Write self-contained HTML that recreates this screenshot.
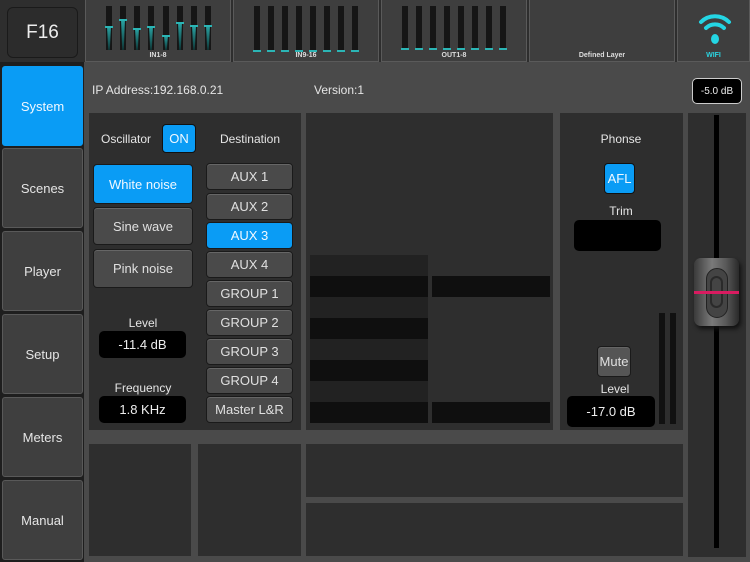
<!DOCTYPE html>
<html><head><meta charset="utf-8"><style>
*{margin:0;padding:0;box-sizing:border-box}
body{width:750px;height:562px;background:#1e1e1e;font-family:"Liberation Sans",sans-serif;color:#e8e8e8;position:relative;overflow:hidden}
.a{position:absolute}
.strip{position:absolute;top:0;height:62px;background:#3e3e3e;border:1px solid #5a5a5a;border-top:none}
.lbl{position:absolute;bottom:2px;left:0;right:0;text-align:center;font-size:7px;color:#ddd;font-weight:bold}
.slot{position:absolute;top:6px;width:6px;height:44px;background:#161616;overflow:visible}
.cap{position:absolute;left:-1px;width:8px;height:2px;background:#2bb5b5}
.fill{position:absolute;left:1px;width:4px;bottom:0;background:linear-gradient(#2aa8a8,#0e3434);clip-path:polygon(0 0,100% 0,70% 100%,30% 100%)}
.nav{position:absolute;left:2px;width:81px;height:80px;background:#3f3f3f;border:1px solid #595959;border-radius:3px;font-size:13px;display:flex;align-items:center;justify-content:center;color:#e5e5e5}
.panel{position:absolute;background:#2e2e2e}
.btn{position:absolute;background:#4a4a4a;border:1px solid #1a1a1a;border-radius:4px;display:flex;align-items:center;justify-content:center;font-size:13px;color:#e0e0e0;box-shadow:inset 0 1px 0 #666}
.blue{background:#0a9cf5!important;color:#f0f8ff;box-shadow:none}
.box{position:absolute;background:#000;border-radius:5px;display:flex;align-items:center;justify-content:center;font-size:13px;color:#eee}
.t{position:absolute;font-size:12px;color:#e5e5e5;text-align:center}
</style></head><body>
<div class="a" style="left:0;top:0;width:750px;height:62px;background:#2e2e2e"></div>
<div class="a" style="left:7px;top:7px;width:71px;height:51px;background:#2c2c2c;border:1px solid #1a1a1a;border-radius:6px;font-size:19px;display:flex;align-items:center;justify-content:center;color:#eee">F16</div>
<div class="strip" style="left:85px;width:146px"><div class="lbl">IN1-8</div></div>
<div class="strip" style="left:233px;width:146px"><div class="lbl">IN9-16</div></div>
<div class="strip" style="left:381px;width:146px"><div class="lbl">OUT1-8</div></div>
<div class="strip" style="left:529px;width:146px"><div class="lbl">Defined Layer</div></div>
<div class="strip" style="left:677px;width:73px"><div class="lbl" style="color:#2bd4e0">WIFI</div>
<svg class="a" style="left:20px;top:10px" width="34" height="34" viewBox="0 0 34 34"><path d="M3 12 A20 20 0 0 1 31 12" stroke="#24d6e4" stroke-width="4" fill="none" stroke-linecap="round"/><path d="M8 18 A13 13 0 0 1 26 18" stroke="#24d6e4" stroke-width="4" fill="none" stroke-linecap="round"/><ellipse cx="17" cy="29" rx="4" ry="5" fill="#24d6e4"/></svg></div>
<div class="slot" style="left:106px"><div class="fill" style="top:20px"></div><div class="cap" style="top:20px"></div></div>
<div class="slot" style="left:120px"><div class="fill" style="top:13px"></div><div class="cap" style="top:13px"></div></div>
<div class="slot" style="left:134px"><div class="fill" style="top:22px"></div><div class="cap" style="top:22px"></div></div>
<div class="slot" style="left:148px"><div class="fill" style="top:20px"></div><div class="cap" style="top:20px"></div></div>
<div class="slot" style="left:163px"><div class="fill" style="top:29px"></div><div class="cap" style="top:29px"></div></div>
<div class="slot" style="left:177px"><div class="fill" style="top:16px"></div><div class="cap" style="top:16px"></div></div>
<div class="slot" style="left:191px"><div class="fill" style="top:19px"></div><div class="cap" style="top:19px"></div></div>
<div class="slot" style="left:205px"><div class="fill" style="top:19px"></div><div class="cap" style="top:19px"></div></div>
<div class="slot" style="left:254px"><div class="cap" style="top:44px"></div></div>
<div class="slot" style="left:268px"><div class="cap" style="top:44px"></div></div>
<div class="slot" style="left:282px"><div class="cap" style="top:44px"></div></div>
<div class="slot" style="left:296px"><div class="cap" style="top:44px"></div></div>
<div class="slot" style="left:310px"><div class="cap" style="top:44px"></div></div>
<div class="slot" style="left:324px"><div class="cap" style="top:44px"></div></div>
<div class="slot" style="left:338px"><div class="cap" style="top:44px"></div></div>
<div class="slot" style="left:352px"><div class="cap" style="top:44px"></div></div>
<div class="slot" style="left:402px"><div class="cap" style="top:42px"></div></div>
<div class="slot" style="left:416px"><div class="cap" style="top:42px"></div></div>
<div class="slot" style="left:430px"><div class="cap" style="top:42px"></div></div>
<div class="slot" style="left:444px"><div class="cap" style="top:42px"></div></div>
<div class="slot" style="left:458px"><div class="cap" style="top:42px"></div></div>
<div class="slot" style="left:472px"><div class="cap" style="top:42px"></div></div>
<div class="slot" style="left:486px"><div class="cap" style="top:42px"></div></div>
<div class="slot" style="left:500px"><div class="cap" style="top:42px"></div></div>
<div class="nav blue" style="top:66px;border-color:#0a9cf5">System</div>
<div class="nav" style="top:148px">Scenes</div>
<div class="nav" style="top:231px">Player</div>
<div class="nav" style="top:314px">Setup</div>
<div class="nav" style="top:397px">Meters</div>
<div class="nav" style="top:480px">Manual</div>
<div class="a" style="left:84px;top:62px;width:666px;height:500px;background:#4a4a4a"></div>
<div class="t" style="left:92px;top:83px;text-align:left">IP Address:192.168.0.21</div>
<div class="t" style="left:314px;top:83px;text-align:left">Version:1</div>
<div class="box" style="left:692px;top:78px;width:50px;height:26px;border:1px solid #ccc;font-size:10px">-5.0 dB</div>
<div class="panel" style="left:89px;top:113px;width:212px;height:317px"></div>
<div class="panel" style="left:306px;top:113px;width:247px;height:317px"></div>
<div class="panel" style="left:560px;top:113px;width:123px;height:317px"></div>
<div class="panel" style="left:688px;top:113px;width:58px;height:444px"></div>
<div class="panel" style="left:89px;top:444px;width:102px;height:112px"></div>
<div class="panel" style="left:198px;top:444px;width:103px;height:112px"></div>
<div class="panel" style="left:306px;top:444px;width:377px;height:53px"></div>
<div class="panel" style="left:306px;top:503px;width:377px;height:53px"></div>
<div class="t" style="left:96px;top:132px;width:60px">Oscillator</div>
<div class="btn blue" style="left:162px;top:124px;width:34px;height:29px;border-color:#111">ON</div>
<div class="t" style="left:210px;top:132px;width:80px">Destination</div>
<div class="btn blue" style="left:93px;top:164px;width:100px;height:40px">White noise</div>
<div class="btn" style="left:93px;top:207px;width:100px;height:38px">Sine wave</div>
<div class="btn" style="left:93px;top:249px;width:100px;height:39px">Pink noise</div>
<div class="t" style="left:99px;top:316px;width:88px">Level</div>
<div class="box" style="left:99px;top:331px;width:87px;height:27px">-11.4 dB</div>
<div class="t" style="left:99px;top:381px;width:88px">Frequency</div>
<div class="box" style="left:99px;top:396px;width:87px;height:27px">1.8 KHz</div>
<div class="btn" style="left:206px;top:163px;width:87px;height:27px">AUX 1</div>
<div class="btn" style="left:206px;top:193px;width:87px;height:27px">AUX 2</div>
<div class="btn blue" style="left:206px;top:222px;width:87px;height:27px">AUX 3</div>
<div class="btn" style="left:206px;top:251px;width:87px;height:27px">AUX 4</div>
<div class="btn" style="left:206px;top:280px;width:87px;height:27px">GROUP 1</div>
<div class="btn" style="left:206px;top:309px;width:87px;height:27px">GROUP 2</div>
<div class="btn" style="left:206px;top:338px;width:87px;height:27px">GROUP 3</div>
<div class="btn" style="left:206px;top:367px;width:87px;height:27px">GROUP 4</div>
<div class="btn" style="left:206px;top:396px;width:87px;height:27px">Master L&amp;R</div>
<div class="a" style="left:310px;top:255px;width:118px;height:168px;background:repeating-linear-gradient(#222 0 21px,#0f0f0f 21px 42px)"></div>
<div class="a" style="left:432px;top:276px;width:118px;height:21px;background:#0f0f0f"></div>
<div class="a" style="left:432px;top:402px;width:118px;height:21px;background:#0f0f0f"></div>
<div class="t" style="left:580px;top:132px;width:82px">Phonse</div>
<div class="btn blue" style="left:604px;top:163px;width:31px;height:31px;border-color:#111">AFL</div>
<div class="t" style="left:580px;top:204px;width:82px">Trim</div>
<div class="box" style="left:574px;top:220px;width:87px;height:31px"></div>
<div class="btn" style="left:597px;top:346px;width:34px;height:31px;background:#555">Mute</div>
<div class="t" style="left:574px;top:382px;width:82px">Level</div>
<div class="box" style="left:567px;top:396px;width:88px;height:31px">-17.0 dB</div>
<div class="a" style="left:659px;top:313px;width:6px;height:111px;background:#111"></div>
<div class="a" style="left:670px;top:313px;width:6px;height:111px;background:#111"></div>
<div class="a" style="left:714px;top:115px;width:5px;height:433px;background:#000"></div>
<div class="a" style="left:694px;top:258px;width:45px;height:68px;border-radius:7px;background:linear-gradient(90deg,#3a3a3a,#7a7a7a 40%,#5a5a5a 70%,#2a2a2a);box-shadow:2px 3px 4px #111"></div>
<div class="a" style="left:706px;top:268px;width:22px;height:50px;border-radius:11px;background:#444;border:1px solid #222"></div>
<div class="a" style="left:710px;top:276px;width:13px;height:32px;border-radius:7px;border:2px solid #2a2a2a"></div>
<div class="a" style="left:694px;top:291px;width:45px;height:3px;background:#d81b60"></div>
</body></html>
